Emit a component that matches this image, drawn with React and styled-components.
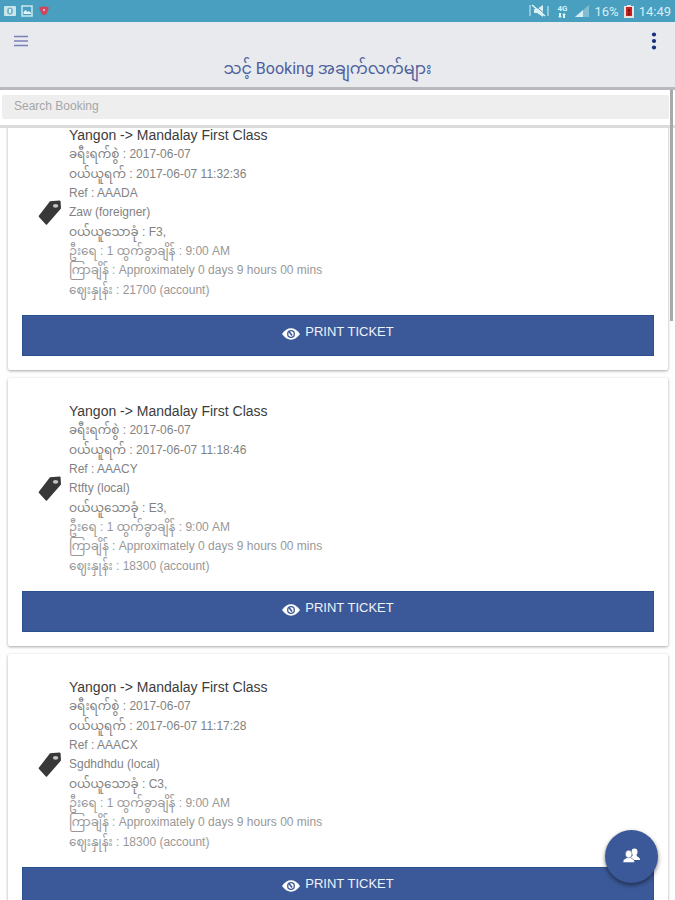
import React, { useLayoutEffect, useRef } from "react"
import styled, { createGlobalStyle } from "styled-components"

const blue = "#3b5998"
const fontStack = `"Liberation Sans", "Noto Sans Myanmar", "Noto Sans", sans-serif`

const bookings = [
  { ref: "AAADA", bought: "2017-06-07 11:32:36", name: "Zaw (foreigner)", seat: "F3,", price: "21700" },
  { ref: "AAACY", bought: "2017-06-07 11:18:46", name: "Rtfty (local)", seat: "E3,", price: "18300" },
  { ref: "AAACX", bought: "2017-06-07 11:17:28", name: "Sgdhdhdu (local)", seat: "C3,", price: "18300" },
]

function StatusIcons() {
  return (
    <StatusGroup>
      <svg width="12" height="10" viewBox="0 0 12 10">
        <rect width="12" height="10" rx="1" fill="#c9e5ea" />
        <ellipse cx="6" cy="5" rx="3" ry="3.5" fill="#6fb3cb" />
        <path d="M5 3h2v4H5z" fill="#d9eff2" />
      </svg>
      <svg width="12" height="12" viewBox="0 0 12 12">
        <rect x="1" y="1" width="10" height="10" fill="none" stroke="#c9e8f0" strokeWidth="1.5" />
        <path d="M2.5 9V7l2-2 2 2 1.5-1L10 8v1z" fill="#e4f5f8" />
      </svg>
      <svg width="12" height="10" viewBox="0 0 12 10">
        <path d="M1 1.500q5-2 10 0L8.500 8Q6 10 3.500 8z" fill="#cf465c" />
        <circle cx="6" cy="4" r="1.2" fill="#eba9b6" />
      </svg>
    </StatusGroup>
  )
}

function SignalIcons() {
  return (
    <StatusGroup>
      <svg width="20" height="14" viewBox="0 0 20 14">
        <path d="M1 1v11M19 2v10" stroke="#a9d5e3" strokeWidth="1.5" />
        <path d="M5 5h3l6-4v12L8 9H5z" fill="#d8eef4" />
        <path d="M4 0l13 11" stroke="#489fbf" strokeWidth="1" />
        <path d="M3 1l13 11" stroke="#e6f6fa" strokeWidth="1.5" />
      </svg>
      <Network>
        <span>4G</span>
        <svg width="8" height="5" viewBox="0 0 8 5">
          <path d="M0 3h1V0h2v3h1L2 5zM4 2l2-2 2 2H7v3H5V2z" fill="#dff2f7" />
        </svg>
      </Network>
      <svg width="14" height="12" viewBox="0 0 14 12">
        <path d="M0 12L14 0v12z" fill="#7fbdd3" />
        <path d="M0 12l8-7v7z" fill="#d5edf4" />
      </svg>
      <span>16%</span>
      <svg width="10" height="13" viewBox="0 0 10 13">
        <path d="M3 0h4v1h3v12H0V1h3z" fill="#e6e3e0" />
        <path d="M2 2h6v9H2z" fill="#c92020" />
        <path d="M5 4v3M5 8v2" stroke="#5d1111" strokeWidth="1.5" />
      </svg>
      <span>14:49</span>
    </StatusGroup>
  )
}

function TagIcon() {
  return (
    <svg width="24" height="26" viewBox="0 0 24 26" aria-hidden="true">
      <path
        d="M12 1.200L21.500.500Q22.500.500 22.600 1.500L23 8.500 9 24.500Q8.400 25 7.800 24.400L.8 16.800Q.4 16.200 1 15.600z"
        fill="#383838"
      />
      <ellipse cx="17.600" cy="5.800" rx="2.700" ry="1.900" fill="#c4c4c4" />
    </svg>
  )
}

function EyeIcon() {
  return (
    <svg width="18" height="12" viewBox="0 0 18 12" aria-hidden="true">
      <path d="M0 6Q4 .3 9 .3T18 6q-4 5.700-9 5.700T0 6z" fill="#fff" />
      <circle cx="9" cy="6" r="3.300" fill="none" stroke={blue} strokeWidth="1.300" />
      <path d="M7 3.500L10 7.500" stroke={blue} strokeWidth="1.500" />
    </svg>
  )
}

function PeopleIcon() {
  return (
    <svg width="17" height="15" viewBox="0 0 17 15" aria-hidden="true">
      <g fill="#fff">
        <ellipse cx="11.500" cy="4" rx="3" ry="3.400" />
        <path d="M8 12V9l2-2h3.500q0 1.500 2 2.200Q17 9.800 17 12z" />
      </g>
      <g fill="#fff" stroke={blue} strokeWidth=".5">
        <path d="M0 14.500q0-3 1.500-3.500 2.500-.5 2.500-2h3.500q0 1.500 2.500 2 1.500.5 1.500 3.500z" />
        <ellipse cx="5.700" cy="6" rx="3.300" ry="3.800" />
      </g>
    </svg>
  )
}

function Booking({ item }) {
  return (
    <Card>
      <Summary>
        <TagIcon />
        <Details>
          <Route>Yangon -&gt; Mandalay First Class</Route>
          <Line>ခရီးရက်စွဲ : 2017-06-07</Line>
          <Line>ဝယ်ယူရက် : {item.bought}</Line>
          <Line>Ref : {item.ref}</Line>
          <Line>{item.name}</Line>
          <Line>ဝယ်ယူသောခုံ : {item.seat}</Line>
          <Line $light>ဦးရေ : 1 ထွက်ခွာချိန် : 9:00 AM</Line>
          <Line $light>ကြာချိန် : Approximately 0 days 9 hours 00 mins</Line>
          <Line $light>ဈေးနှုန်း : {item.price} (account)</Line>
        </Details>
      </Summary>
      <PrintButton type="button">
        <EyeIcon />
        <ButtonLabel>PRINT TICKET</ButtonLabel>
      </PrintButton>
    </Card>
  )
}

function App() {
  const listRef = useRef(null)

  useLayoutEffect(() => {
    listRef.current.scrollTop = 34
  }, [])

  return (
    <Page>
      <GlobalStyle />
      <StatusBar>
        <StatusIcons />
        <SignalIcons />
      </StatusBar>
      <Toolbar>
        <ToolbarRow>
          <IconButton type="button" aria-label="Menu">
            <svg width="14" height="12" viewBox="0 0 14 12">
              <path d="M0 1.500h14M0 6h14M0 10.500h14" stroke="#7b80b8" strokeWidth="1.600" />
            </svg>
          </IconButton>
          <IconButton type="button" aria-label="More">
            <svg width="6" height="18" viewBox="0 0 6 18">
              <g fill="#17307c">
                <circle cx="3" cy="2.500" r="2.100" />
                <circle cx="3" cy="9" r="2.100" />
                <circle cx="3" cy="15.500" r="2.100" />
              </g>
            </svg>
          </IconButton>
        </ToolbarRow>
        <Title>သင့် Booking အချက်လက်များ</Title>
      </Toolbar>
      <Content>
        <SearchBar>
          <SearchInput type="search" placeholder="Search Booking" aria-label="Search Booking" />
        </SearchBar>
        <List ref={listRef}>
          {bookings.map((item) => (
            <Booking key={item.ref} item={item} />
          ))}
        </List>
        <ScrollThumb />
        <Fab type="button" aria-label="Passengers">
          <PeopleIcon />
        </Fab>
      </Content>
    </Page>
  )
}

const GlobalStyle = createGlobalStyle`
  * {
    box-sizing: border-box;
  }

  body {
    margin: 0;
    background: #fefefe;
    font-family: ${fontStack};
  }

  button, input {
    font-family: inherit;
  }
`

const Page = styled.div`
  display: flex;
  flex-direction: column;
  height: 100vh;
  overflow: hidden;
`

const StatusBar = styled.div`
  display: flex;
  flex: none;
  align-items: center;
  justify-content: space-between;
  height: 22px;
  padding: 0 4px;
  background: #489fbf;
  color: #d8eef5;
  font-family: Roboto, sans-serif;
  font-size: 13px;
`

const StatusGroup = styled.div`
  display: flex;
  align-items: center;
  gap: 5px;
`

const Network = styled.div`
  display: flex;
  flex-direction: column;
  align-items: center;
  gap: 1px;
  padding: 0 3px;
  font-size: 8px;
  font-weight: 700;
  line-height: 7px;
`

const Toolbar = styled.header`
  flex: none;
  height: 68px;
  background: #e8eaee;
  border-bottom: 3px solid #b8b9bc;
`

const ToolbarRow = styled.div`
  display: flex;
  align-items: center;
  justify-content: space-between;
  height: 36px;
  padding: 2px 10px 0;
`

const IconButton = styled.button`
  display: flex;
  align-items: center;
  justify-content: center;
  min-width: 22px;
  height: 24px;
  padding: 0;
  border: 0;
  background: none;
`

const Title = styled.h1`
  margin: 0;
  padding-right: 20px;
  color: #4e5f9e;
  font-family: Roboto, ${fontStack};
  font-size: 16px;
  font-weight: 400;
  line-height: 22px;
  text-align: center;
`

const Content = styled.main`
  position: relative;
  display: flex;
  flex: 1;
  flex-direction: column;
  min-height: 0;
`

const SearchBar = styled.div`
  flex: none;
  padding: 5px 6px 6px 2px;
  background: #fff;
  border-bottom: 3px solid #dcdcdc;
`

const SearchInput = styled.input`
  display: block;
  width: 100%;
  height: 24px;
  padding: 0 12px 2px;
  border: 0;
  border-radius: 2px;
  background: #eee;
  font-size: 12px;
  outline: none;

  &::placeholder {
    color: #a6a6a6;
  }
`

const List = styled.div`
  flex: 1;
  min-height: 0;
  padding: 8px 7px 8px 8px;
  overflow-y: auto;
  scrollbar-width: none;
`

const Card = styled.article`
  margin-bottom: 8px;
  padding: 24px 14px 14px;
  border-radius: 2px;
  background: #fff;
  box-shadow: 0 1px 3px rgba(0, 0, 0, 0.35);
`

const Summary = styled.div`
  display: flex;
  align-items: center;
  gap: 7px;
  padding-left: 16px;
`

const Details = styled.div`
  display: grid;
  grid-auto-rows: 1fr;
  align-items: center;
  height: 174px;
`

const Route = styled.h2`
  margin: 0;
  color: #3c3c3c;
  font-size: 14px;
  font-weight: 400;
  line-height: 19px;
`

const Line = styled.p`
  margin: 0;
  color: ${(props) => (props.$light ? "#989898" : "#828282")};
  font-size: 12px;
  line-height: 19px;
  white-space: nowrap;
`

const PrintButton = styled.button`
  display: flex;
  align-items: center;
  justify-content: center;
  gap: 5px;
  width: 100%;
  height: 41px;
  margin-top: 15px;
  padding: 0 0 4px;
  border: 1px solid #29508f;
  background: ${blue};
  color: #eef2fa;
  font-size: 13px;
`

const ButtonLabel = styled.span`
  padding-bottom: 4px;
`

const ScrollThumb = styled.div`
  position: absolute;
  top: 0;
  right: 2px;
  width: 3px;
  height: 231px;
  background: #a9a9a9;
`

const Fab = styled.button`
  position: absolute;
  right: 17px;
  bottom: 17px;
  display: flex;
  align-items: center;
  justify-content: center;
  width: 53px;
  height: 53px;
  padding: 0 0 2px;
  border: 0;
  border-radius: 50%;
  background: ${blue};
  box-shadow: 0 2px 4px rgba(0, 0, 0, 0.5);
`

export default App
